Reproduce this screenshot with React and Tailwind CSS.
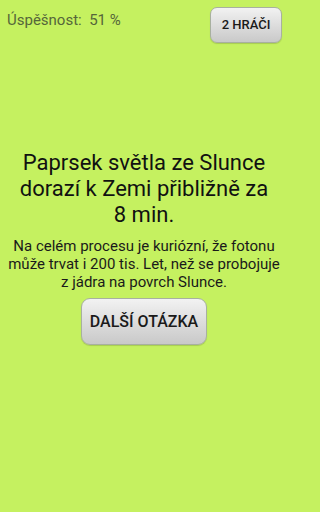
export default function App() {
  return (
    <div className="w-full min-h-screen bg-[#c5f160]">
      <div className="w-[288px] h-[512px] bg-[#c5f160] font-['Roboto',sans-serif] overflow-hidden">
        <div className="flex justify-between items-start pl-[7px] pr-[6px] pt-[7px]">
          <span className="mt-[2px] text-[15px] text-[#55663a] whitespace-pre">Úspěšnost:  51 %</span>
          <button className="w-[72px] h-[36px] rounded-[7px] border border-[#a8b0a0] bg-gradient-to-b from-[#f2f2f2] to-[#c9c9c9] text-[13px] font-medium text-[#1a1a1a] shadow-[0_1px_1px_rgba(0,0,0,0.15)]">
            2 HRÁČI
          </button>
        </div>
        <div className="mt-[107px] flex flex-col items-center text-center px-[8px]">
          <p className="text-[22px] leading-[25.8px] text-[#111]">
            Paprsek světla ze Slunce<br />dorazí k Zemi přibližně za<br />8 min.
          </p>
          <p className="mt-[11px] text-[15px] leading-[17.6px] text-[#1a1a1a]">
            Na celém procesu je kuriózní, že fotonu<br />může trvat i 200 tis. Let, než se probojuje<br />z jádra na povrch Slunce.
          </p>
          <button className="mt-[7px] w-[126px] h-[47px] rounded-[9px] border border-[#a8b0a0] bg-gradient-to-b from-[#f2f2f2] to-[#c9c9c9] text-[16px] font-medium text-[#1a1a1a] shadow-[0_1px_1px_rgba(0,0,0,0.15)]">
            DALŠÍ OTÁZKA
          </button>
        </div>
      </div>
    </div>
  );
}
